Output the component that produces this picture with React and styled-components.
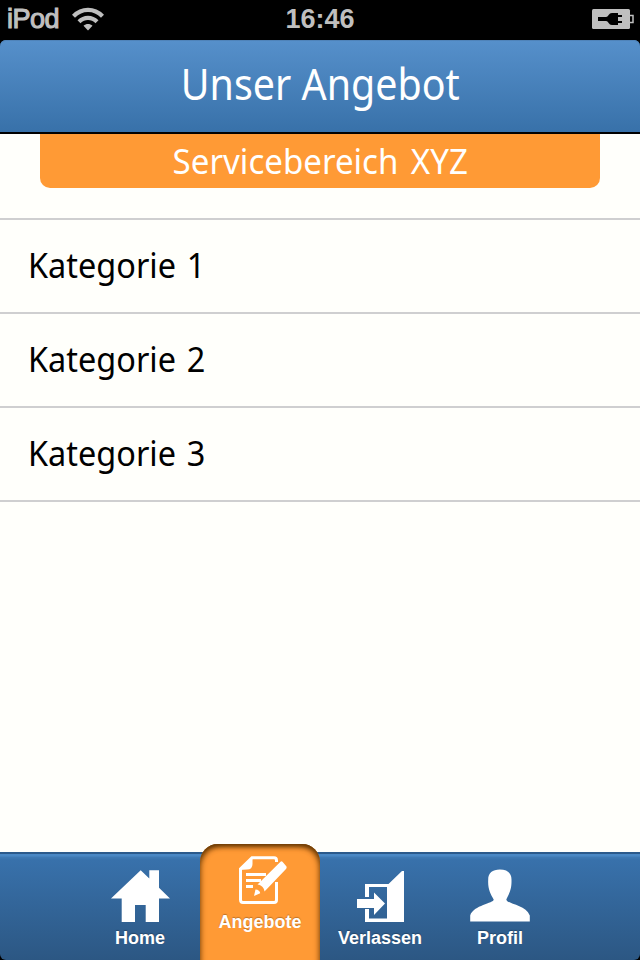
import React from "react";
import styled, { createGlobalStyle } from "styled-components";

const GlobalStyle = createGlobalStyle`
  * { box-sizing: border-box; }
  html, body { margin: 0; padding: 0; background: #000; }
  svg { display: block; flex: none; }
`;

const Screen = styled.div`
  width: 640px;
  height: 960px;
  display: flex;
  flex-direction: column;
  background: #000;
  overflow: hidden;
  font-family: "Noto Sans", sans-serif;
`;

const StatusBar = styled.div`
  height: 40px;
  flex: none;
  display: grid;
  grid-template-columns: 1fr auto 1fr;
  align-items: center;
  padding: 0 6px 2px 7px;
  color: #bfbfbf;
  font-family: "Liberation Sans", sans-serif;
  font-size: 27px;
  line-height: 38px;
`;

const Carrier = styled.div`
  display: flex;
  align-items: center;
  gap: 13px;
  letter-spacing: -0.5px;
  -webkit-text-stroke: 1.1px #bfbfbf;
`;

const Clock = styled.div`
  margin-right: 1px;
  font-weight: 700;
`;

const Battery = styled.div`
  display: flex;
  justify-content: flex-end;
`;

const Fit = styled.span`
  display: inline-block;
  white-space: nowrap;
  word-spacing: ${(p) => p.$gap || 0}px;
  transform: scaleX(${(p) => p.$x || 1});
  transform-origin: ${(p) => p.$origin || "center"};
`;

const Header = styled.header`
  height: 94px;
  flex: none;
  display: flex;
  justify-content: center;
  border-bottom: 2px solid #000;
  border-radius: 6px 6px 0 0;
  background: linear-gradient(#5690cb, #3871a9);
  box-shadow: inset 0 1px 0 #4f83b9;
`;

const Title = styled.h1`
  margin: 0;
  color: #fff;
  font-size: 43px;
  font-weight: 400;
  line-height: 88px;
`;

const Content = styled.main`
  flex: 1;
  background: #fffffb;
`;

const Banner = styled.div`
  height: 54px;
  margin: 0 40px 30px;
  border-radius: 0 0 10px 10px;
  background: #ff9a35;
  color: #fff;
  font-size: 35px;
  line-height: 54px;
  text-align: center;
`;

const List = styled.ul`
  list-style: none;
  margin: 0;
  padding: 0;
  border-top: 2px solid #cfcfd0;
`;

const Row = styled.li`
  height: 94px;
  padding-left: 28px;
  border-bottom: 2px solid #cfcfd0;
  color: #000;
  font-size: 35px;
  line-height: 90px;
`;

const TabBar = styled.nav`
  height: 108px;
  flex: none;
  display: flex;
  justify-content: center;
  align-items: flex-end;
  border-radius: 0 0 6px 6px;
  background: linear-gradient(#2b5a8b 0 2px, #4a88c4 2px 4px, #3f7bb5 5px, #3871ab 8px, #2c5783 100%);
`;

const Tab = styled.div`
  width: 120px;
  height: ${(p) => (p.$active ? 116 : 108)}px;
  padding-top: ${(p) => (p.$active ? 8 : 14)}px;
  flex: none;
  display: flex;
  flex-direction: column;
  align-items: center;
  border-radius: ${(p) => (p.$active ? "18px 18px 0 0" : "0")};
  background: ${(p) => (p.$active ? "#ff9a35" : "none")};
  box-shadow: ${(p) => (p.$active ? "inset 0 6px 7px -5px #623500, inset 5px 5px 6px -5px #623500, inset -5px 5px 6px -5px #623500" : "none")};
`;

const TabLabel = styled.span`
  margin-top: ${(p) => p.$gap}px;
  color: #fff;
  font: 700 18px/22px "Liberation Sans", sans-serif;
  text-shadow: 0 -1px 1px rgba(0, 0, 0, 0.25);
`;

const WifiIcon = () => (
  <svg width="32" height="24" viewBox="0 0 32 24" fill="none" stroke="#bfbfbf" strokeWidth="4.2">
    <path d="M1.5 9.2C9.8.8 22.2.8 30.5 9.2" />
    <path d="M7 14.8c5.2-5.2 12.8-5.2 18 0" />
    <path d="M11.5 18.8c2.6-2.4 6.4-2.4 9 0L16 23.4z" fill="#bfbfbf" stroke="none" />
  </svg>
);

const BatteryIcon = () => (
  <svg width="42" height="20" viewBox="0 0 42 20">
    <rect width="38" height="20" rx="1.5" fill="#bfbfbf" />
    <path d="M38 6.5h3v7h-3" fill="none" stroke="#bfbfbf" strokeWidth="1.5" />
    <path d="M6 8h8c3-.5 2.5-4 6-4h6v2h4v2h-4v4h4v2h-4v2h-6c-3.5 0-3-3.5-6-4H6z" fill="#000" />
  </svg>
);

const HomeIcon = () => (
  <svg width="60" height="56" viewBox="110 866 60 56" fill="#fff">
    <path d="M111 898.5 140.7 870.3 149.3 878.5V870.3H159V887.8L170 898.5H159V922H145.7V905H135V922H121.7V898.5z" />
  </svg>
);

const OfferIcon = () => (
  <svg width="52" height="54" viewBox="234 852 52 54" overflow="visible">
    <path d="M276.5 862V860.5Q276.5 857.8 274 857.8H252L240.5 869V899.5Q240.5 902.5 243 902.5H274Q276.5 902.5 276.5 900V882" fill="none" stroke="#fff" strokeWidth="3" />
    <path d="M239 870 252.5 857V864Q252.5 869.5 247 869.5z" fill="#fff" />
    <path d="M246 874.5H266M246 880.5H261M246 886.5H253" stroke="#fff" strokeWidth="2.8" />
    <path d="M257.5 884.5 280.5 861.7Q281.5 861 282.5 861.8L286.5 866.5Q287 868 286 869L264.5 891.5C264 887.5 261.5 885 257.5 884.5z" fill="#fff" />
    <path d="M255.5 889.5C258.3 889.5 260 891.3 260.2 893.2L254 896z" fill="#fff" />
  </svg>
);

const LeaveIcon = () => (
  <svg width="48" height="56" viewBox="356 866 48 56" fill="#fff">
    <path d="M365 884H388.5L402 871H404V922H365V909H369V918.5H387V887H369V897H365z" />
    <path d="M357 899H374V892.5L385 903.5 374 915V908H357z" />
  </svg>
);

const ProfileIcon = () => (
  <svg width="60" height="56" viewBox="470.5 866 60 56" fill="#fff">
    <path d="M500.3 869.5C508 869.5 512.2 873 512 880C512.3 890 509.3 894 506.8 899.5C507 904 526 904.5 530.3 915.5V921.5H470.7V915.5C474 905 494.5 903.5 494.2 899.5C491 894 488.2 889 488.7 880C488.5 873 492.8 869.5 500.3 869.5z" />
  </svg>
);

const categories = ["Kategorie 1", "Kategorie 2", "Kategorie 3"];

const tabs = [
  { label: "Home", Icon: HomeIcon, gap: 5 },
  { label: "Angebote", Icon: OfferIcon, gap: 5, active: true },
  { label: "Verlassen", Icon: LeaveIcon, gap: 5 },
  { label: "Profil", Icon: ProfileIcon, gap: 5 },
];

export default function App() {
  return (
    <Screen>
      <GlobalStyle />
      <StatusBar>
        <Carrier>
          iPod
          <WifiIcon />
        </Carrier>
        <Clock>16:46</Clock>
        <Battery>
          <BatteryIcon />
        </Battery>
      </StatusBar>
      <Header>
        <Title>
          <Fit $x={0.916}>Unser Angebot</Fit>
        </Title>
      </Header>
      <Content>
        <Banner>
          <Fit $x={0.945} $gap={4}>
            Servicebereich XYZ
          </Fit>
        </Banner>
        <List>
          {categories.map((name) => (
            <Row key={name}>
              <Fit $x={0.927} $gap={2.5} $origin="left">
                {name}
              </Fit>
            </Row>
          ))}
        </List>
      </Content>
      <TabBar>
        {tabs.map(({ label, Icon, gap, active }) => (
          <Tab key={label} $active={active}>
            <Icon />
            <TabLabel $gap={gap}>{label}</TabLabel>
          </Tab>
        ))}
      </TabBar>
    </Screen>
  );
}
